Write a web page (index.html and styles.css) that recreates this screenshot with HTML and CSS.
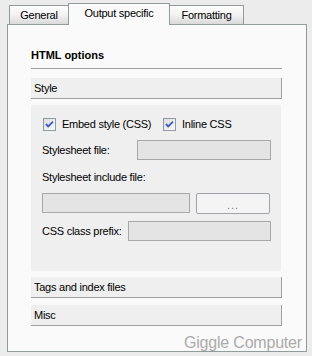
FILE: index.html
```html
<!DOCTYPE html>
<html>
<head>
<meta charset="utf-8">
<link rel="stylesheet" href="styles.css">
</head>
<body>
<div class="tabs">
  <div class="tab tab-general">General</div>
  <div class="tab tab-active">Output specific</div>
  <div class="tab tab-format">Formatting</div>
</div>
<div class="panel">
  <div class="title">HTML options</div>
  <div class="section-head">Style</div>
  <div class="section-body">
    <div class="row checks">
      <label class="check check-first">
        <svg class="cb" width="13" height="13" viewBox="0 0 13 13"><defs><linearGradient id="g1" x1="0" y1="0" x2="1" y2="1"><stop offset="0" stop-color="#dcdcd8"/><stop offset="1" stop-color="#fbfbfb"/></linearGradient></defs><rect x="0.5" y="0.5" width="12" height="12" fill="url(#g1)" stroke="#8e9aa4"/><path d="M3 6 L5.2 8.4 L10 3.6" fill="none" stroke="#3c5cc4" stroke-width="1.9"/></svg>
        <span>Embed style (CSS)</span>
      </label>
      <label class="check">
        <svg class="cb" width="13" height="13" viewBox="0 0 13 13"><defs><linearGradient id="g2" x1="0" y1="0" x2="1" y2="1"><stop offset="0" stop-color="#dcdcd8"/><stop offset="1" stop-color="#fbfbfb"/></linearGradient></defs><rect x="0.5" y="0.5" width="12" height="12" fill="url(#g2)" stroke="#8e9aa4"/><path d="M3 6 L5.2 8.4 L10 3.6" fill="none" stroke="#3c5cc4" stroke-width="1.9"/></svg>
        <span>Inline CSS</span>
      </label>
    </div>
    <div class="row field field-sheet">
      <span class="lbl lbl-sheet">Stylesheet file:</span>
      <span class="input"></span>
    </div>
    <div class="row text-row">Stylesheet include file:</div>
    <div class="row field field-include">
      <span class="input"></span>
      <span class="btn">...</span>
    </div>
    <div class="row field field-prefix">
      <span class="lbl lbl-prefix">CSS class prefix:</span>
      <span class="input"></span>
    </div>
  </div>
  <div class="section-head head-tags">Tags and index files</div>
  <div class="section-head head-misc">Misc</div>
</div>
<div class="watermark">Giggle Computer</div>
</body>
</html>
```
FILE: styles.css
```css
html, body {
  margin: 0;
  padding: 0;
}
body {
  width: 312px;
  height: 356px;
  background: #ececec;
  font-family: "Liberation Sans", Arial, sans-serif;
  font-size: 11px;
  letter-spacing: -0.25px;
  color: #000;
  position: relative;
  overflow: hidden;
}
.tabs {
  display: flex;
  align-items: flex-end;
  height: 24px;
  padding-left: 9px;
}
.tab {
  box-sizing: border-box;
  height: 19px;
  border: 1px solid #919b9c;
  border-bottom: none;
  background: linear-gradient(#fdfdfd, #f2f2f2 50%, #dadada);
  display: flex;
  align-items: center;
  justify-content: center;
  line-height: 13px;
  padding-top: 1px;
}
.tab-general {
  width: 60px;
}
.tab-active {
  width: 102px;
  height: 22px;
  margin-left: -1px;
  margin-bottom: -1px;
  background: #fafafa;
  position: relative;
  z-index: 1;
  padding-top: 0;
  padding-bottom: 2px;
}
.tab-format {
  width: 75px;
  margin-left: -1px;
}
.panel {
  box-sizing: border-box;
  margin-left: 7px;
  width: 300px;
  height: 328px;
  border: 1px solid #919b9c;
  background: #fafafa;
  padding: 24px 24px 0 23px;
}
.title {
  font-weight: bold;
  line-height: 13px;
  padding-bottom: 6px;
  border-bottom: 1px solid #a0a0a0;
  letter-spacing: 0;
}
.section-head {
  box-sizing: border-box;
  height: 21px;
  margin-top: 9px;
  background: #efefef;
  border-right: 1px solid #a0a0a0;
  border-bottom: 1px solid #a0a0a0;
  padding-left: 3px;
  line-height: 20px;
}
.head-tags {
  margin-top: 6px;
}
.head-misc {
  margin-top: 7px;
}
.section-body {
  box-sizing: border-box;
  margin-top: 6px;
  margin-right: 1px;
  height: 166px;
  background: #efefef;
  padding: 13px 10px 0 11px;
  display: flex;
  flex-direction: column;
}
.row {
  display: flex;
  align-items: center;
}
.checks {
  height: 13px;
  padding-left: 1px;
}
.check {
  display: flex;
  align-items: center;
  gap: 6px;
  line-height: 13px;
}
.check-first {
  width: 120px;
}
.cb {
  display: block;
  flex: none;
}
.field {
  height: 20px;
}
.field-sheet {
  margin-top: 9px;
}
.text-row {
  margin-top: 10px;
  height: 14px;
  line-height: 14px;
}
.field-include {
  margin-top: 9px;
  gap: 6px;
  padding-right: 1px;
}
.field-prefix {
  margin-top: 8px;
}
.lbl {
  flex: none;
}
.lbl-sheet {
  width: 95px;
}
.lbl-prefix {
  width: 86px;
}
.input {
  box-sizing: border-box;
  flex: 1;
  height: 20px;
  background: #e4e4e4;
  border: 1px solid #a8a8a8;
}
.btn {
  box-sizing: border-box;
  flex: none;
  width: 74px;
  height: 21px;
  background: #f4f4f4;
  border: 1px solid #a0a4a8;
  border-radius: 2px;
  color: #7c7c7c;
  text-align: center;
  line-height: 22px;
  letter-spacing: 1px;
}
.watermark {
  position: absolute;
  left: 184px;
  top: 334px;
  font-size: 16px;
  line-height: 18px;
  color: #ababab;
  font-family: "Liberation Sans", Arial, sans-serif;
  letter-spacing: -0.2px;
}
```
